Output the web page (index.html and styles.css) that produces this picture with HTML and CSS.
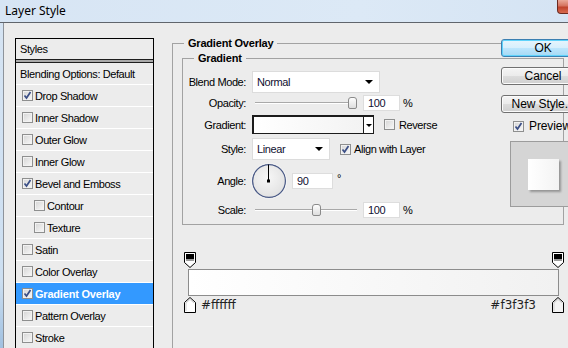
FILE: index.html
```html
<!DOCTYPE html>
<html lang="en">
<head>
  <meta charset="UTF-8">
  <meta name="viewport" content="width=device-width, initial-scale=1.0">
  <title>Layer Style</title>
  <link rel="stylesheet" href="styles.css">
</head>
<body>
  <div class="window">
    <div class="titlebar">
      <span class="title">Layer Style</span>
      <span class="close"></span>
    </div>

    <div class="client">
      <!-- styles list -->
      <div class="styles-list">
        <div class="item header">Styles</div>
        <div class="item blending">Blending Options: Default</div>
        <div class="item"><span class="check on"><svg viewBox="0 0 9 9"><path d="M1.5 4.5l2 2.5l4-6" /></svg></span>Drop Shadow</div>
        <div class="item"><span class="check"></span>Inner Shadow</div>
        <div class="item"><span class="check"></span>Outer Glow</div>
        <div class="item"><span class="check"></span>Inner Glow</div>
        <div class="item"><span class="check on"><svg viewBox="0 0 9 9"><path d="M1.5 4.5l2 2.5l4-6" /></svg></span>Bevel and Emboss</div>
        <div class="item sub"><span class="check"></span>Contour</div>
        <div class="item sub"><span class="check"></span>Texture</div>
        <div class="item"><span class="check"></span>Satin</div>
        <div class="item"><span class="check"></span>Color Overlay</div>
        <div class="item active"><span class="check on"><svg viewBox="0 0 9 9"><path d="M1.5 4.5l2 2.5l4-6" /></svg></span>Gradient Overlay</div>
        <div class="item"><span class="check"></span>Pattern Overlay</div>
        <div class="item"><span class="check"></span>Stroke</div>
      </div>

      <!-- gradient overlay settings -->
      <div class="main">
        <fieldset class="group outer">
          <legend>Gradient Overlay</legend>
          <fieldset class="group inner">
            <legend>Gradient</legend>

            <div class="row row-blend">
              <span class="lbl">Blend Mode:</span>
              <div class="select blend-select"><span>Normal</span><span class="arrow"></span></div>
            </div>

            <div class="row row-opacity">
              <span class="lbl">Opacity:</span>
              <div class="slider"><span class="track"></span><span class="thumb" style="left: 96px"></span></div>
              <div class="field">100</div>
              <span class="unit">%</span>
            </div>

            <div class="row row-gradient">
              <span class="lbl">Gradient:</span>
              <div class="grad-pick"><span class="grad-swatch"></span><span class="grad-drop"><span class="arrow small"></span></span></div>
              <label class="opt opt-reverse"><span class="check"></span>Reverse</label>
            </div>

            <div class="row row-style">
              <span class="lbl">Style:</span>
              <div class="select style-select"><span>Linear</span><span class="arrow"></span></div>
              <label class="opt opt-align"><span class="check on"><svg viewBox="0 0 9 9"><path d="M1.5 4.5l2 2.5l4-6" /></svg></span>Align with Layer</label>
            </div>

            <div class="row row-angle">
              <span class="lbl">Angle:</span>
              <svg class="dial" width="36" height="36" viewBox="0 0 36 36">
                <defs>
                  <radialGradient id="dialFill" cx="45%" cy="40%" r="60%">
                    <stop offset="0" stop-color="#f7f7f7" />
                    <stop offset="1" stop-color="#e2e2e2" />
                  </radialGradient>
                </defs>
                <circle cx="18" cy="18" r="16.5" fill="url(#dialFill)" stroke="#4a5a86" stroke-width="1.4" />
                <circle cx="18" cy="18" r="17.5" fill="none" stroke="#fafafa" stroke-width="0.8" />
                <line x1="17.5" y1="18" x2="17.5" y2="1.5" stroke="#000" stroke-width="1" />
                <rect x="16" y="16.5" width="3" height="3" fill="#000" />
              </svg>
              <div class="field angle-field">90</div>
              <span class="degree">°</span>
            </div>

            <div class="row row-scale">
              <span class="lbl">Scale:</span>
              <div class="slider"><span class="track"></span><span class="thumb" style="left: 60px"></span></div>
              <div class="field">100</div>
              <span class="unit">%</span>
            </div>
          </fieldset>

          <div class="grad-editor">
            <div class="stops">
              <svg width="12" height="16" viewBox="0 0 12 16"><path d="M0.5 0.5h11v10l-5.5 5l-5.5-5z" fill="#fff" stroke="#000" /><rect x="2" y="2" width="8" height="5" fill="#000" /><rect x="2" y="7" width="8" height="2" fill="#9a9a9a" /></svg>
              <svg width="12" height="16" viewBox="0 0 12 16"><path d="M0.5 0.5h11v10l-5.5 5l-5.5-5z" fill="#fff" stroke="#000" /><rect x="2" y="2" width="8" height="5" fill="#000" /><rect x="2" y="7" width="8" height="2" fill="#9a9a9a" /></svg>
            </div>
            <div class="grad-bar"></div>
            <div class="stops bottom">
              <svg width="12" height="16" viewBox="0 0 12 16"><path d="M0.5 15.5v-10l5.5-5l5.5 5v10z" fill="#fff" stroke="#000" /><path d="M2 14v-8l4-3.6l4 3.6" fill="none" stroke="#cfcfcf" /></svg>
              <span class="hex">#ffffff</span>
              <span class="hex right">#f3f3f3</span>
              <svg width="12" height="16" viewBox="0 0 12 16"><path d="M0.5 15.5v-10l5.5-5l5.5 5v10z" fill="#f3f3f3" stroke="#000" /><path d="M2 14v-8l4-3.6l4 3.6" fill="none" stroke="#cfcfcf" /></svg>
            </div>
          </div>
        </fieldset>
      </div>

      <!-- buttons and preview -->
      <div class="side">
        <button class="btn default">OK</button>
        <button class="btn">Cancel</button>
        <button class="btn last">New Style...</button>
        <label class="opt preview-check"><span class="check on"><svg viewBox="0 0 9 9"><path d="M1.5 4.5l2 2.5l4-6" /></svg></span>Preview</label>
        <div class="preview"><span class="swatch"></span></div>
      </div>
    </div>
  </div>
</body>
</html>
```

FILE: styles.css
```css
* {
  margin: 0;
  padding: 0;
  box-sizing: border-box;
}

html, body {
  width: 568px;
  height: 348px;
  overflow: hidden;
}

body {
  font-family: "Liberation Sans", Arial, sans-serif;
  font-size: 11px;
  letter-spacing: -0.4px;
  color: #000;
  background: #ececec;
}

.window {
  width: 600px;
  height: 400px;
  background: linear-gradient(#d6e4f3, #cddff1 70%, #7ea9d3);
}

/* title bar */
.titlebar {
  height: 23px;
  display: flex;
  align-items: flex-start;
  justify-content: space-between;
  background: linear-gradient(to right, #d7e5f4, #dce9f6 60%, #d4e3f3);
  border-bottom: 1px solid #60656c;
}

.title {
  font-family: "Noto Sans", sans-serif;
  font-size: 12px;
  letter-spacing: 0;
  line-height: 21px;
  padding-left: 5px;
}

.close {
  width: 43px;
  height: 14px;
  border: 1px solid #6b2a20;
  border-top: none;
  border-radius: 0 0 0 4px;
  background: linear-gradient(#eaa999, #d5735f 45%, #c0432c 55%, #d86a4f);
}

.client {
  display: flex;
  align-items: flex-start;
  height: 377px;
  margin-left: 3px;
  border-left: 1px solid #8d939b;
  background: #ececec;
  padding: 15px 0 0 11px;
}

/* styles list */
.styles-list {
  width: 139px;
  height: 330px;
  flex-shrink: 0;
  border: 1px solid #000;
}

.item {
  height: 22px;
  display: flex;
  align-items: center;
  gap: 2px;
  padding-left: 6px;
  border-bottom: 1px solid #fff;
  white-space: nowrap;
}

.item.header {
  height: 21px;
  padding-left: 4px;
  margin-bottom: 3px;
  border-bottom: 1px solid #1e1e1e;
  box-shadow: 0 2px 0 #a9a9a9, 0 3px 0 #1e1e1e;
}

.item.blending {
  padding-left: 4px;
}

.item.sub {
  padding-left: 18px;
}

.item.active {
  background: #3399ff;
  color: #fff;
  font-weight: bold;
  letter-spacing: -0.2px;
}

.check {
  width: 11px;
  height: 11px;
  flex-shrink: 0;
  display: inline-flex;
  align-items: center;
  justify-content: center;
  border: 1px solid #8e8f8f;
  background: linear-gradient(135deg, #d4d4d4, #f9f9f9);
  box-shadow: inset 0 0 0 1px #f2f2f2;
}

.check svg {
  width: 9px;
  height: 9px;
}

.check path {
  fill: none;
  stroke: #3b4f86;
  stroke-width: 1.7;
}

/* settings panel */
.main {
  width: 309px;
  margin-left: 18px;
  flex-shrink: 0;
}

fieldset.group {
  border: 1px solid #a2a2a2;
}

fieldset.group legend {
  font-weight: bold;
  letter-spacing: -0.2px;
  line-height: 13px;
  padding: 0 4px;
}

.outer {
  height: 360px;
  margin-top: -1px;
  padding: 2px 8px 0 9px;
}

.outer > legend {
  margin-left: 2px;
}

.inner {
  padding: 6px 8px 6px 5px;
}

.inner > legend {
  margin-left: 6px;
}

.row {
  display: flex;
  align-items: center;
  white-space: nowrap;
}

.lbl {
  width: 58px;
  margin-right: 6px;
  text-align: right;
  flex-shrink: 0;
}

.row-blend { height: 22px; }
.row-opacity { height: 16px; margin-top: 2px; }
.row-gradient { height: 19px; margin-top: 4px; }
.row-style { height: 22px; margin-top: 4px; }
.row-angle { height: 36px; margin-top: 3px; }
.row-scale { height: 16px; margin-top: 3px; }

.select {
  height: 22px;
  display: flex;
  align-items: center;
  justify-content: space-between;
  padding: 0 6px 0 4px;
  background: #fff;
  border: 1px solid #dcdcdc;
  color: #101030;
}

.blend-select { width: 128px; }
.style-select { width: 78px; }

.arrow {
  width: 0;
  height: 0;
  border-left: 4px solid transparent;
  border-right: 4px solid transparent;
  border-top: 4px solid #000;
}

.arrow.small {
  border-left-width: 3px;
  border-right-width: 3px;
  border-top-width: 3px;
}

.slider {
  position: relative;
  width: 108px;
  height: 16px;
}

.track {
  position: absolute;
  left: 3px;
  right: 3px;
  top: 7px;
  height: 2px;
  border-top: 1px solid #a9a9a9;
  border-bottom: 1px solid #fff;
}

.thumb {
  position: absolute;
  top: 2px;
  width: 9px;
  height: 12px;
  border: 1px solid #8a8a8a;
  border-radius: 3px 3px 2px 2px;
  background: linear-gradient(#fdfdfd, #dedede);
}

.field {
  width: 37px;
  height: 16px;
  margin-left: 3px;
  padding-left: 4px;
  line-height: 14px;
  background: #fff;
  border: 1px solid #dddddd;
  color: #101030;
}

.unit {
  margin-left: 3px;
}

.grad-pick {
  width: 122px;
  height: 19px;
  display: flex;
  border: 1px solid #1c1c1c;
  border-top-width: 2px;
  border-left-width: 2px;
}

.grad-swatch {
  flex: 1;
  background: linear-gradient(to right, #fff, #f3f3f3);
}

.grad-drop {
  width: 10px;
  display: flex;
  align-items: center;
  justify-content: center;
  border-left: 1px solid #1c1c1c;
  background: #fff;
}

.opt {
  display: flex;
  align-items: center;
  gap: 4px;
}

.opt-reverse { margin-left: 10px; }
.opt-align { margin-left: 10px; gap: 3px; }

.dial {
  display: block;
  margin-left: -1px;
}

.angle-field {
  width: 41px;
  margin-left: 5px;
}

.degree {
  margin-left: 4px;
  margin-top: -7px;
}

/* gradient editor */
.grad-editor {
  width: 380px;
  margin: 21px 0 0 2px;
  padding: 6px 0 7px;
  background: #ececec;
}

.stops {
  height: 17px;
  display: flex;
  justify-content: space-between;
  align-items: flex-start;
}

.stops svg {
  display: block;
}

.stops.bottom {
  height: 16px;
  margin-top: 1px;
  justify-content: flex-start;
  align-items: center;
}

.grad-bar {
  width: 371px;
  height: 27px;
  margin-left: 4px;
  border: 1px solid #8c8c8c;
  background: linear-gradient(to right, #fff, #f1f1f1);
}

.hex {
  font-family: "DejaVu Sans", Verdana, sans-serif;
  font-size: 12px;
  letter-spacing: 0;
  color: #222;
  margin-left: 5px;
}

.hex.right {
  margin-left: auto;
  margin-right: 16px;
}

/* buttons and preview */
.side {
  width: 84px;
  margin-left: 20px;
  padding-top: 1px;
  flex-shrink: 0;
}

.btn {
  display: block;
  width: 84px;
  height: 18px;
  margin-bottom: 10px;
  font-family: "Liberation Sans", Arial, sans-serif;
  font-size: 12px;
  letter-spacing: -0.1px;
  line-height: 16px;
  color: #000;
  border: 1px solid #707070;
  border-radius: 3px;
  background: linear-gradient(#f4f4f4, #ebebeb 50%, #dddddd 50%, #cfcfcf);
  box-shadow: inset 0 0 0 1px #fbfbfb;
}

.btn.default {
  border-color: #3c7fb1;
  background: linear-gradient(#e6f5fd, #d7effc 50%, #bde6fd 50%, #a6d9f4);
  box-shadow: inset 0 0 0 1px #5fd3fb;
}

.btn.last {
  margin-bottom: 7px;
}

.preview-check {
  height: 12px;
  margin-left: 12px;
  gap: 5px;
  font-size: 12px;
  letter-spacing: -0.1px;
}

.preview {
  width: 66px;
  height: 66px;
  margin: 9px 0 0 9px;
  display: flex;
  align-items: center;
  justify-content: center;
  border: 1px solid #9c9c9c;
  background: #d5d5d5;
}

.swatch {
  width: 31px;
  height: 31px;
  background: linear-gradient(to right, #fff, #f3f3f3);
  box-shadow: 2px 2px 2px rgba(0, 0, 0, 0.3);
}
```
